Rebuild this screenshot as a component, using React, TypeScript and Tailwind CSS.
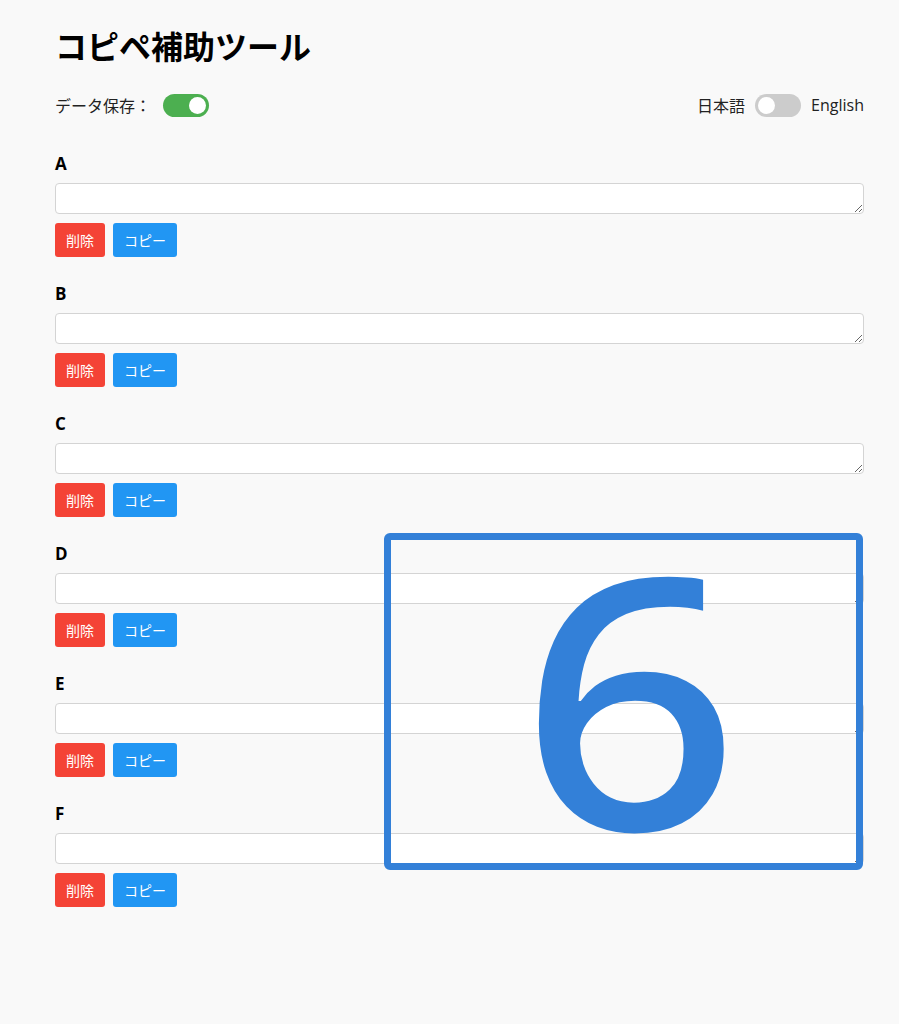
import { useState } from 'react';

const fields = ['A', 'B', 'C', 'D', 'E', 'F'];

function Toggle({ on, onChange }: { on: boolean; onChange: () => void }) {
  return (
    <button
      type="button"
      onClick={onChange}
      className={`relative h-[23px] w-[46px] rounded-full ${on ? 'bg-[#4caf50]' : 'bg-[#cccccc]'}`}
    >
      <span
        className={`absolute top-[3px] h-[17px] w-[17px] rounded-full bg-white ${on ? 'left-[26px]' : 'left-[3px]'}`}
      />
    </button>
  );
}

function FieldRow({ label }: { label: string }) {
  const [value, setValue] = useState('');
  return (
    <div className="mb-[25px]">
      <div
        className="h-[24px] text-[17px] leading-[24px] font-bold text-black"
        style={{ fontFamily: '"Open Sans", sans-serif' }}
      >
        {label}
      </div>
      <textarea
        value={value}
        onChange={(e) => setValue(e.target.value)}
        rows={1}
        className="mt-[7px] block h-[31px] w-full rounded-[4px] border border-[#d4d4d4] bg-white px-2 text-[14px]"
      />
      <div className="mt-[9px] flex gap-[8px]">
        <button
          type="button"
          onClick={() => setValue('')}
          className="h-[34px] w-[50px] rounded-[3px] bg-[#f44336] text-[14px] text-white"
        >
          削除
        </button>
        <button
          type="button"
          onClick={() => navigator.clipboard?.writeText(value)}
          className="h-[34px] w-[64px] rounded-[3px] bg-[#2196f3] text-[14px] text-white"
        >
          コピー
        </button>
      </div>
    </div>
  );
}

export default function App() {
  const [save, setSave] = useState(true);
  const [english, setEnglish] = useState(false);

  return (
    <div
      className="relative min-h-[1024px] bg-[#f9f9f9] text-[#222]"
      style={{ fontFamily: '"Noto Sans CJK JP", "Noto Sans", sans-serif' }}
    >
      <div className="ml-[55px] w-[809px] pt-[25px]">
        <h1 className="text-[32px] leading-[40px] font-bold text-black">コピペ補助ツール</h1>

        <div className="mt-[28px] flex h-[24px] items-center justify-between text-[16px]">
          <div className="flex items-center gap-[12px]">
            <span>データ保存：</span>
            <Toggle on={save} onChange={() => setSave(!save)} />
          </div>
          <div className="flex items-center gap-[10px]">
            <span>日本語</span>
            <Toggle on={english} onChange={() => setEnglish(!english)} />
            <span style={{ fontFamily: '"Open Sans", sans-serif' }}>English</span>
          </div>
        </div>

        <div className="mt-[35px]">
          {fields.map((f) => (
            <FieldRow key={f} label={f} />
          ))}
        </div>
      </div>

      {/* step marker overlay */}
      <div className="pointer-events-none absolute left-[384px] top-[533px] flex h-[337px] w-[479px] items-center justify-center rounded-[6px] border-[7px] border-[#3380d8]">
        <span
          className="-mt-[14px] ml-[14px] inline-block scale-x-[1.1] text-[350px] leading-none font-medium text-[#3380d8]"
          style={{ fontFamily: '"Noto Sans", sans-serif' }}
        >
          6
        </span>
      </div>
    </div>
  );
}
